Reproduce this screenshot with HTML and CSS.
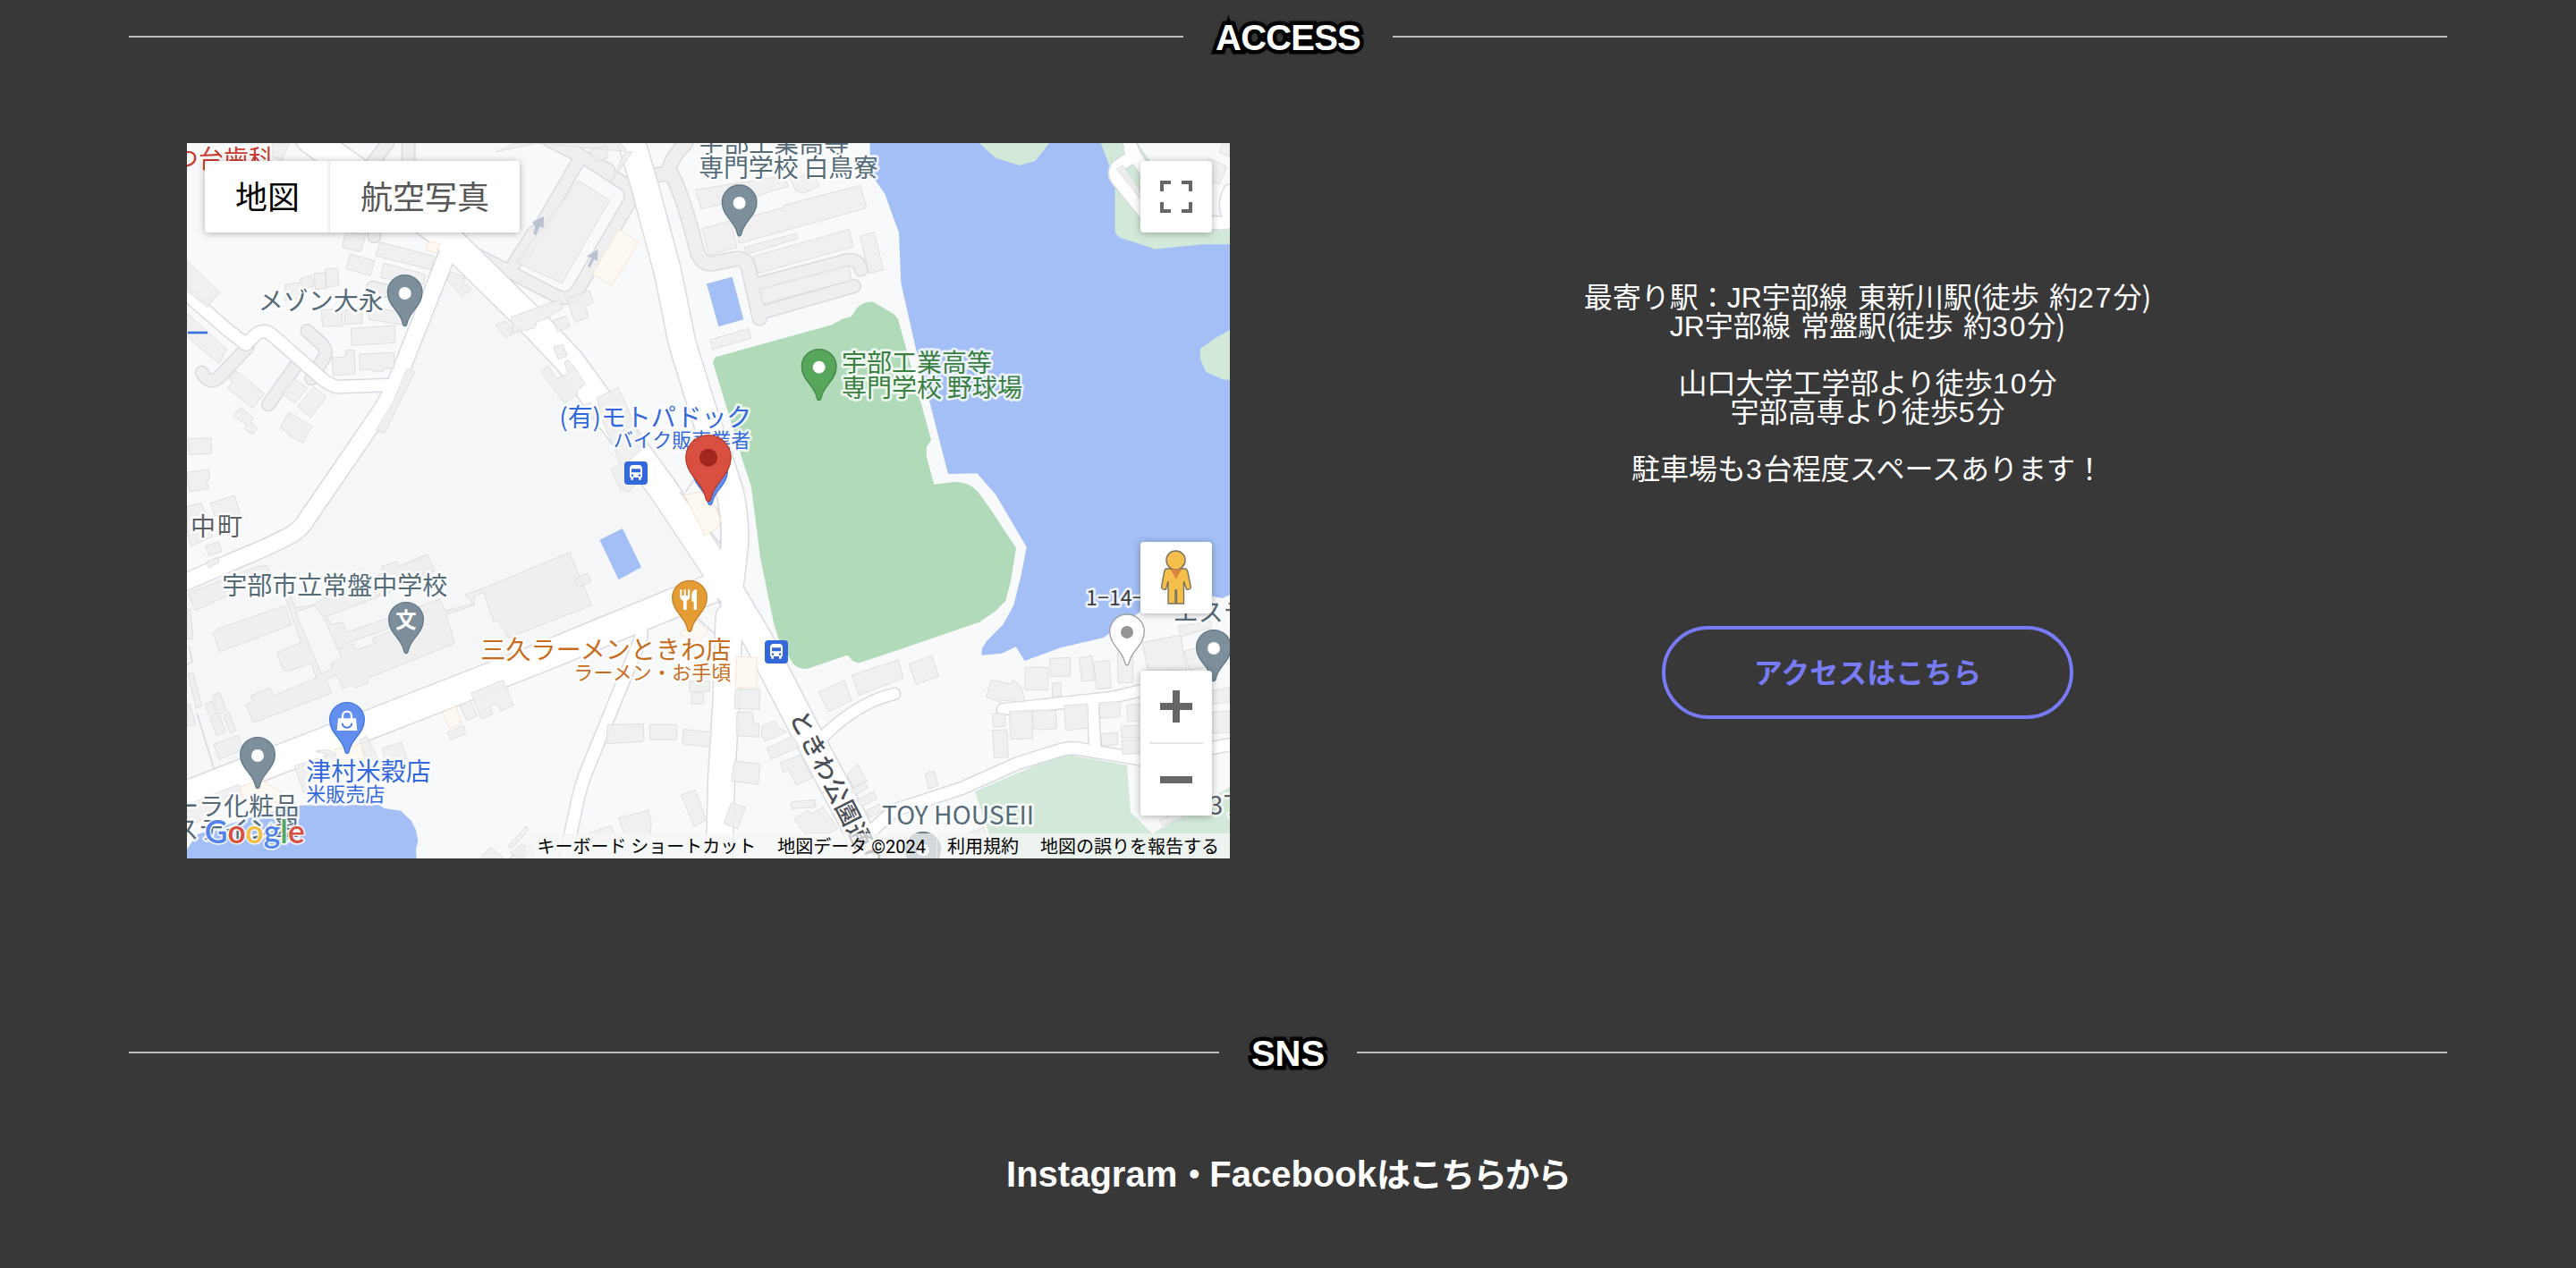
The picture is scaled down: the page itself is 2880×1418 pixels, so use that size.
FILE: index.html
```html
<!DOCTYPE html>
<html lang="ja">
<head>
<meta charset="utf-8">
<title>ACCESS</title>
<link rel="stylesheet" href="styles.css">
</head>
<body>
<main class="page">
  <h2 class="heading"><span class="heading-text heading-access">ACCESS</span></h2>

  <section class="access">
    <div class="access-col">
      <div class="map">
        <svg class="map-canvas" viewBox="27 30 3498 2400" aria-hidden="true">
          <defs>
            <path id="pin" d="M0 113C-6 113-7 105-9 97C-19 62-58 42-58 0A58 58 0 1 1 58 0C58 42 19 62 9 97C7 105 6 113 0 113Z"/>
            <g id="bus">
              <rect width="78" height="78" rx="12" fill="#3367dc"/>
              <path fill="#fff" fill-rule="evenodd" d="M18 24Q18 12 30 12H48Q60 12 60 24V54H56V62H48V54H30V62H22V54H18ZM24 25V37H54V25ZM27 43a4 4 0 1 0 .1 0ZM51 43a4 4 0 1 0 .1 0Z"/>
            </g>
            <g id="roads">
              <path class="w98" d="M440 15L880 330L1200 645L1310 762L1630 1200L1790 1440L1945 1700L2100 2000L2260 2300L2330 2450"/>
              <path class="w92" d="M1515 15L1564 180L1639 460L1688 700L1740 870L1848 1200Q1868 1290 1864 1380L1850 1500"/>
              <path class="w98" d="M0 2228L620 1988L1200 1762L1655 1575L1800 1520"/>
              <path class="w88" d="M1845 1620L1836 1900L1820 2150L1812 2450"/>
              <path class="w42" d="M1552 1640L1550 1690L1375 2118Q1345 2190 1330 2270L1295 2440"/>
              <path class="w54" d="M905 390L730 830Q710 880 670 940L430 1290Q410 1325 375 1345Q300 1385 200 1425L0 1512"/>
              <path class="w40" d="M0 515L155 650L225 705L255 675Q285 648 315 676L465 808Q500 840 530 848L700 842"/>
              <path class="w42" d="M2320 2340L2400 2268L2625 2195L2815 2110L2965 2064Q3000 2056 3040 2066L3225 2097L3465 2060L3540 2045"/>
              <path class="w36" d="M2762 1930L3130 1890L3225 1867L3340 1830"/>
              <path class="w36" d="M3065 1905L3073 2065"/>
              <path class="w36" d="M2150 2030L2200 1985Q2300 1900 2400 1878"/>
              <path class="w40" d="M3180 10L3205 70L3150 108Q3130 130 3150 155L3260 290"/>
              <path class="w40" d="M3190 50L3290 190M3440 290Q3500 308 3540 288M3525 190Q3500 240 3525 280"/>
            </g>
            <g id="lanes">
              <path class="w42" d="M430 660L478 703Q505 730 480 760L445 820"/>
              <path class="w42" d="M77 800Q105 850 145 805L230 715"/>
              <path class="w42" d="M300 907L390 780"/>
              <path class="w42" d="M655 310V343M650 515L690 525"/>
              <path class="w46" d="M1640 130Q1650 80 1700 30M1600 138L1650 130Q1690 200 1740 400Q1760 445 1800 432L1860 420Q1900 410 1910 450L1948 617"/>
              <path class="w42" d="M1930 505L2210 432Q2280 405 2288 455M1950 600L2265 510"/>
              <path class="w42" d="M1240 20L1440 120M1330 60L1500 170Q1530 200 1505 240L1340 520Q1310 565 1260 540L1000 405M1160 400L1340 90M1120 440L1190 330M640 110L700 30M770 20V110"/>
              <path class="w42" d="M1120 2450L1165 2410"/>
            </g>
          </defs>

          <rect x="27" y="30" width="3498" height="2400" fill="#f8f9fb"/>
          <path fill="#f5f6f8" d="M920 430L1200 715L1765 1470L1640 1530L27 2160V1520L400 1360L500 1240L720 820Z"/>
          <path fill="#a3bff5" d="M2318 30V130L2368 200L2400 290L2415 330L2422 500L2472 720L2580 1140L2677 1138L2740 1210L2843 1385L2825 1480L2800 1580L2765 1645L2710 1700L2694 1725L2692 1748L2760 1742L2807 1720L2837 1767L2960 1722L3100 1690L3230 1598L3465 1550L3500 1557L3525 1546V30Z"/>
          <path fill="#a3bff5" d="M27 2400L60 2350L250 2290L400 2252L670 2250L690 2262L745 2270L780 2305L795 2335L802 2370L795 2400L797 2430H27Z"/>
          <path fill="#a3bff5" d="M1770 502L1856 479L1894 622L1810 646ZM1411 1361L1488 1323L1551 1453L1475 1495Z"/>
          <path fill="#d2e8d8" d="M2684 30L2740 80L2820 105L2872 90L2920 30ZM3092 30L3117 95L3140 175V330L3155 347L3275 386L3430 370H3525V30ZM3525 657L3475 685L3426 720L3425 752L3445 798L3500 822L3525 826Z"/>
          <path fill="#f8f9fb" d="M3215 30L3300 150L3440 290L3525 280V30Z"/>
          <path fill="#d2e8d8" d="M2670 2205L2950 2085H3000L3180 2117L3192 2275L3265 2347L3525 2190V2430H2745L2715 2340Z"/>
          <path fill="#b1dab9" d="M1791 765L1800 748L2190 640L2225 620L2255 612L2275 582Q2300 560 2330 563L2400 605L2412 620L2523 1025L2508 1050L2507 1080L2533 1175L2600 1167Q2650 1165 2680 1200L2720 1255L2808 1388L2790 1500L2773 1565L2740 1600L2685 1637L2400 1735L2285 1773Q2262 1775 2250 1755Q2245 1744 2230 1752L2110 1793Q2070 1800 2050 1760L2010 1690L1995 1640L1950 1420L1920 1185L1880 1060Z"/>

          <use href="#lanes" class="casing"/>
          <use href="#lanes" class="lane-fill"/>
          <use href="#roads" class="casing"/>
          <use href="#roads" class="road-fill"/>
          <path class="edge" d="M1815 1030L1700 1200M1803 1250Q1825 1300 1815 1375L1680 1200M1805 1557L1820 1575L1810 1560ZM1740 1625L1795 1675M35 1720L45 1770L27 1780M60 1940L118 2130"/>

          <g class="building">
            <path d="M27 425L137 530L95 580L27 525ZM27 600L160 720L135 770L27 680ZM560 330L627 335L610 395L547 380ZM575 402L656 425L643 475L562 452ZM675 362L858 410L845 455L660 408ZM688 433L827 470L820 505L676 482ZM491 452L533 450L536 508L495 513ZM453 467L491 465L494 518L458 521ZM405 485L445 472L453 510L415 520ZM356 505L403 497L408 550L356 560Z"/>
            <path d="M478 590L548 585V645H482ZM557 590L615 585V635L556 638ZM640 580L765 600L755 640L637 622ZM577 652L725 642V700L580 709ZM605 738L722 733V785L686 787L685 796H650V789L608 791ZM560 725L588 724L592 805L517 810L514 750L560 747ZM190 793L287 870L247 920L163 852L178 832L170 818ZM385 820L431 852L390 903L345 870ZM453 848L495 882L442 950L399 914ZM208 916L250 953L240 965L263 988L247 1007L221 990L228 977L183 945ZM368 934L446 980L415 1036L368 1010L367 1002L339 985ZM765 787L791 798L735 910L690 1004L662 992L718 900ZM910 462L958 480L955 500L983 520L970 530L950 545L900 490Z"/>
            <path d="M31 1023L108 1018L110 1072L34 1075ZM27 1135L100 1125L104 1158L95 1160L98 1190L35 1200ZM105 1238L186 1212L206 1275L120 1280ZM27 1250L75 1237L90 1275L112 1350L40 1382L27 1330ZM90 1382L133 1367L143 1400L100 1415ZM90 1437L130 1420L136 1435L100 1455Z"/>
            <path d="M31 1540L265 1450L295 1448L310 1480L55 1598ZM340 1520L370 1530L390 1590L450 1580L480 1560L820 1415L858 1465L700 1540L495 1618L510 1645L550 1637L562 1672L760 1602L875 1560L893 1600L988 1575L960 1545L1018 1525L1310 1404L1385 1580L1105 1690L1072 1630L1057 1637L1022 1538L990 1550V1580L895 1612L925 1708L635 1825V1840L590 1858L582 1848L550 1860L530 1815L493 1828L512 1875L250 1975L225 1915L248 1903L240 1885L305 1857L318 1885L460 1825L445 1775L365 1802L350 1798L328 1740L410 1705L370 1590ZM390 1604L478 1810L512 1795V1775L545 1755L485 1620L455 1582ZM538 1728L585 1710L595 1730L655 1710L650 1692L740 1655L725 1640L700 1660L560 1710Z" fill-rule="evenodd"/>
            <path d="M115 1675L130 1660L355 1582L377 1647L137 1736ZM680 1450L730 1434L740 1450L833 1410L858 1465L700 1500ZM1327 1493L1370 1473L1383 1500L1340 1521ZM27 1595L38 1595L47 1690L35 1695L27 1690ZM30 1810L47 1807L77 1920L58 1925ZM27 1915L37 1912L55 1980L27 1988ZM88 1912L112 1902L128 1945L105 1955ZM112 1885L137 1873L160 1935L135 1947ZM107 1962L137 1952L157 2005L127 2018ZM150 1950L168 1940L191 2000L172 2010ZM117 2047L200 2017L215 2065L135 2097ZM387 2120L500 2083L460 2070L500 2065L540 2090L520 2145L420 2210ZM605 2033L630 2020L665 2090L635 2110ZM683 2060L745 2040L765 2095L695 2110ZM162 2197L200 2182L215 2210L60 2310L27 2290V2250Z"/>
            <path d="M980 1875L1087 1832L1122 1915L1080 1935L1065 1910L1043 1920L1053 1945L1015 1962ZM942 1918L978 1900L1001 1952L966 1967ZM900 2008L955 1983L962 2010L912 2033ZM1103 2390L1165 2322L1173 2335L1117 2395ZM1112 2412L1152 2380L1195 2430L1140 2430ZM1010 2430L1045 2392L1090 2430Z"/>
            <path d="M1062 60L1130 30H1480L1500 50L1450 160L1520 60L1200 30ZM315 30H370L345 88L312 75ZM1340 155L1445 222L1285 500L1130 430ZM1378 52L1435 38L1437 80L1395 92ZM1732 187L2030 140L2045 175L1990 190L1945 208L1800 240L1752 250ZM2050 150L2130 130L2147 175L2098 198L2070 190ZM1755 317L1850 290L1872 380L1778 407ZM1870 290L2030 245V238L2285 172L2306 248L1878 367ZM1897 380L2070 333L2076 350L1900 405ZM1926 410L2248 320L2263 378L2140 412L1942 467ZM2284 343L2332 328L2363 455L2315 467ZM1946 520L2248 440L2256 490L1960 570ZM1782 690L1910 652L1920 685L1790 722ZM1302 550L1378 525L1390 565L1365 577L1372 615L1327 632ZM1115 613L1278 555L1287 585L1250 605L1245 615L1200 630L1195 650L1120 668ZM1062 642L1095 627L1122 665L1100 685ZM1255 625L1298 610L1312 645L1270 663ZM1255 715L1287 705L1302 745L1273 755ZM1215 797L1240 778L1265 822L1305 803L1293 765L1305 757L1325 780L1362 838L1335 862L1338 872L1293 903Z"/>
            <path d="M1403 885L1473 850L1510 930L1560 1050L1495 1110L1560 1140L1510 1200L1480 1190L1450 1125L1480 1105L1420 960ZM1345 915L1380 900L1400 945L1360 970Z"/>
            <path d="M1712 1835H1780V1870H1712ZM1720 1874H1760V1912H1719ZM1437 1982L1558 1978L1560 2037L1434 2045ZM1580 1981H1670V2032H1579ZM1692 1996L1787 2007L1780 2057L1689 2045ZM1684 2217L1732 2200L1767 2300L1728 2323ZM1475 2295L1575 2268L1585 2310L1580 2350L1495 2350ZM1375 2345L1450 2320L1465 2360L1390 2390Z"/>
            <path d="M1866 1862L1949 1864L1947 1930L1864 1927ZM1872 1940L1925 1938L1927 1972L1946 1978L1945 2023L1870 2018ZM1863 2103L1950 2113L1943 2182L1853 2170ZM1853 2243L1900 2258L1875 2330L1828 2312ZM1958 1985L1997 1968L2010 1990L2038 2005L1965 2038L1953 2015ZM1972 2060L2060 2020L2082 2055L1988 2097ZM2017 2108L2085 2082L2125 2160L2070 2183L2045 2130L2028 2143ZM2053 2240L2135 2233V2258L2055 2263ZM2063 2300L2108 2268L2122 2280L2160 2258L2210 2330L2180 2345L2100 2345Z"/>
            <path d="M2146 1872L2232 1833L2257 1900L2178 1938ZM2257 1815L2400 1768L2412 1762L2430 1825L2405 1835L2280 1883ZM2240 2150L2277 2115L2307 2170L2265 2195ZM2250 2200L2300 2175L2313 2190L2270 2218ZM2270 2235L2330 2205L2342 2230L2290 2255ZM2305 2270L2350 2247L2360 2272L2317 2292Z"/>
            <path d="M2448 1778L2525 1749L2549 1818L2473 1846ZM2838 1789H2915V1865H2838ZM2921 1759L2990 1756V1818L2922 1820ZM3020 1757L3063 1750L3070 1832L3028 1836ZM3068 1772L3120 1766L3127 1858L3078 1862ZM3148 1740H3200V1840H3150ZM3232 1705L3360 1680L3380 1797L3250 1800ZM3352 1650L3460 1635L3465 1655L3360 1687ZM3372 1735L3420 1722L3440 1790L3388 1797ZM2725 1830L2790 1845L2800 1830L2828 1860L2837 1905L2760 1900L2755 1905L2708 1888ZM2928 1843L2958 1840L2960 1885L2930 1888ZM2785 1937L2861 1933L2863 2028L2790 2030ZM2862 1933L2942 1932L2944 1995L2866 1998ZM2969 1917L3048 1912L3050 1992L2975 2000ZM2729 1945L2770 1943L2772 1985L2732 1990ZM2728 2000L2777 1998L2782 2090L2735 2092ZM3086 1908L3155 1903L3157 1955L3090 1960ZM3180 1915L3230 1912V1968L3183 1970ZM3092 2012L3148 2008V2048L3095 2052ZM3160 1987L3230 1982V2025H3163ZM3163 2035L3230 2030V2078L3165 2080ZM3465 1868L3525 1855V1905L3465 1912ZM3465 1940L3525 1935V2008L3465 2010ZM2503 2145L2533 2137L2547 2185L2515 2197ZM2640 2350L2700 2325L2720 2400L2600 2400ZM3290 2300L3345 2275L3370 2290L3300 2320ZM3500 30H3525V75L3490 62ZM3455 82L3515 108L3490 167L3430 150ZM3145 118L3165 105L3230 200V225Z"/>
          </g>
          <g class="poi-area">
            <path d="M1475 320L1542 363L1452 508L1387 470ZM833 360L875 367L865 398L832 390ZM885 1940L930 1920L948 1975L908 1995ZM520 2065L610 2045L625 2100L540 2115ZM205 2190L270 2165L350 2210L330 2240L215 2230Z"/>
            <path d="M1682 1673L1735 1630L1775 1667L1740 1705L1682 1680ZM1870 1753L1940 1755L1938 1858L1867 1856ZM1695 1210L1775 1195L1815 1290L1812 1318L1765 1347Z"/>
          </g>
          <path fill="#bcc1d3" d="M1372 440L1385 415L1367 410L1405 386L1404 425L1393 420L1378 450ZM1188 332L1195 310L1185 295L1224 276L1223 316L1210 310L1198 340Z"/>

          <g class="label slate">
            <text x="266" y="592">メゾン大永</text>
            <text x="1744" y="62">宇部工業高等</text>
            <text x="1744" y="144" textLength="602">専門学校 白鳥寮</text>
            <text x="145" y="1545" textLength="756">宇部市立常盤中学校</text>
            <text x="-17" y="2286">ーラ化粧品</text>
            <text x="-17" y="2364">ステイン翠</text>
            <text x="3335" y="1634">エステ</text>
            <text x="2358" y="2315" textLength="510" lengthAdjust="spacingAndGlyphs">TOY HOUSEII</text>
            <text x="3455" y="2284" class="town">3丁</text>
          </g>
          <text class="label town" x="39" y="1346" textLength="174">中町</text>
          <text class="label address" x="3042" y="1580">1−14−5</text>
          <text class="label red" x="-18" y="115">つ台歯科</text>
          <g class="label green">
            <text x="2223" y="799" textLength="504">宇部工業高等</text>
            <text x="2223" y="883" textLength="606">専門学校 野球場</text>
          </g>
          <g class="label blue">
            <text x="1276" y="982" textLength="645">(有)モトパドック</text>
            <text class="small" x="1918" y="1050" text-anchor="end">バイク販売業者</text>
            <text x="427" y="2169" textLength="418">津村米穀店</text>
            <text class="small" x="427" y="2238">米販売店</text>
          </g>
          <path stroke="#3b70dc" stroke-width="8" d="M30 666H96"/>
          <g class="label orange">
            <text x="1012" y="1760" textLength="840">三久ラーメンときわ店</text>
            <text class="small" x="1852" y="1829" text-anchor="end" textLength="528">ラーメン・お手頃</text>
          </g>
          <g class="label street" transform="translate(2046 1954) rotate(63)">
            <text textLength="588">ときわ公園通り</text>
          </g>

          <g class="pin-slate">
            <use href="#pin" x="758" y="531"/><use href="#pin" x="1880" y="229"/>
            <use href="#pin" x="762" y="1629"/><use href="#pin" x="264" y="2082"/>
            <use href="#pin" x="3471" y="1722"/><use href="#pin" x="2496" y="2400"/>
          </g>
          <use href="#pin" x="2147" y="780" fill="#58a55c" stroke="#418647" stroke-width="4"/>
          <use href="#pin" x="564" y="1965" fill="#628fee" stroke="#4377dd" stroke-width="4"/>
          <use href="#pin" x="1782" y="1131" fill="#628fee" stroke="#4377dd" stroke-width="4"/>
          <use href="#pin" x="1713" y="1556" fill="#e49c35" stroke="#c8832b" stroke-width="4"/>
          <use href="#pin" x="3180" y="1669" fill="#fff" stroke="#9c9fa0" stroke-width="4"/>
          <g fill="#fff">
            <circle cx="758" cy="534" r="21"/><circle cx="1880" cy="231" r="21"/>
            <circle cx="264" cy="2085" r="21"/><circle cx="3471" cy="1725" r="21"/>
            <circle cx="2496" cy="2402" r="21"/><circle cx="2147" cy="782" r="21"/>
          </g>
          <circle cx="3180" cy="1671" r="21" fill="#969696"/>
          <text class="pin-glyph" x="762" y="1656" text-anchor="middle">文</text>
          <path fill="#fff" d="M534 1960H594L598 2001H530Z"/>
          <path fill="none" stroke="#fff" stroke-width="7" d="M549 1962V1952A15 15 0 0 1 579 1952V1962"/>
          <path fill="none" stroke="#4a7de0" stroke-width="6" d="M548 1976A16 15 0 0 0 580 1976"/>
          <path fill="#fff" d="M1681 1528H1687V1548H1694V1528H1700V1548H1707V1528H1714V1552Q1714 1562 1703 1565V1596H1692V1565Q1681 1562 1681 1552ZM1737 1527V1596H1727V1568H1720V1545Q1722 1528 1737 1527Z"/>
          <use href="#pin" transform="translate(1776 1085) scale(1.3)" fill="#d94f40" stroke="#b3392d" stroke-width="3"/>
          <circle cx="1776" cy="1085" r="30" fill="#a1271e"/>
          <use href="#bus" x="1494" y="1098"/><use href="#bus" x="1965" y="1698"/>
          <text class="brand" x="86" y="2379" textLength="336" lengthAdjust="spacingAndGlyphs"><tspan fill="#5383ec">G</tspan><tspan fill="#d85040">o</tspan><tspan fill="#f2bf42">o</tspan><tspan fill="#5383ec">g</tspan><tspan fill="#58a55c">l</tspan><tspan fill="#d85040">e</tspan></text>
        </svg>

        <div class="map-types">
          <button class="map-type is-active">地図</button>
          <button class="map-type">航空写真</button>
        </div>
        <button class="map-control map-full" aria-label="全画面">
          <svg width="36" height="36" viewBox="0 0 36 36"><path fill="none" stroke="#666" stroke-width="4" d="M2 12V2H12M24 2H34V12M34 24V34H24M12 34H2V24"/></svg>
        </button>
        <button class="map-control map-pegman" aria-label="ペグマン">
          <svg width="36" height="62" viewBox="0 0 36 62"><g fill="#f4bf4b" stroke="#77715f" stroke-width="1.4"><path d="M7 21H28Q30 21 31 25L34.500 42Q33 45 29.500 44L26.500 35V60H18.500V45H17V60H9V35L6.500 44Q3 45 1.500 42L4.500 25Q5.500 21 7 21Z"/><circle cx="17.500" cy="11.500" r="10.500"/></g><path fill="#d98442" d="M11.500 21.500H24L17.800 32.500Z"/></svg>
        </button>
        <div class="map-control map-zoom">
          <svg width="36" height="36" viewBox="0 0 36 36"><path fill="#666" d="M14 0H22V14H36V22H22V36H14V22H0V14H14Z"/></svg>
          <i class="zoom-line"></i>
          <svg width="36" height="36" viewBox="0 0 36 36"><path fill="#666" d="M0 14H36V22H0Z"/></svg>
        </div>
        <div class="map-legal">
          <span>キーボード ショートカット</span><span>地図データ ©2024</span><span>利用規約</span><span>地図の誤りを報告する</span>
        </div>
      </div>
    </div>

    <div class="access-col access-info">
      <p class="directions">最寄り駅：<span class="latin">JR</span>宇部線 東新川駅(徒歩 約<span class="num">27</span>分)<br><span class="latin">JR</span>宇部線 常盤駅(徒歩 約<span class="num">30</span>分)<br><br>山口大学工学部より徒歩<span class="num">10</span>分<br>宇部高専より徒歩<span class="num">5</span>分<br><br>駐車場も<span class="num">3</span>台程度スペースあります！</p>
      <a class="access-button">アクセスはこちら</a>
    </div>
  </section>

  <h2 class="heading"><span class="heading-text">SNS</span></h2>
  <p class="sns-lead">Instagram<span class="kana">・</span>Facebook<span class="kana">はこちらから</span></p>
</main>
</body>
</html>
```
FILE: styles.css
```css
* { box-sizing: border-box; }
html, body { margin: 0; }
body {
  background: #383838;
  color: #fff;
  font-family: "Noto Sans CJK JP", sans-serif;
  height: 1418px;
  overflow: hidden;
}
.page { padding: 0 144px; }

.heading {
  display: flex;
  align-items: center;
  gap: 36px;
  height: 82px;
  margin: 0;
  font: bold 40px/40px "Liberation Sans", Arial, sans-serif;
}
.heading::before, .heading::after {
  content: "";
  flex: 1;
  height: 2px;
  background: #bcbebc;
}
.heading-text {
  padding-top: 2px;
  -webkit-text-stroke: 9px #000;
  paint-order: stroke fill;
  text-shadow: 0 0 6px #000;
}
.heading-access { letter-spacing: -.8px; }

.access { display: flex; height: 1054px; padding-top: 78px; }
.access-col { flex: 1; display: flex; flex-direction: column; align-items: center; }

.map {
  position: relative;
  width: 1166px;
  height: 800px;
  overflow: hidden;
}
.map-canvas { display: block; width: 100%; height: 100%; }
.casing, .road-fill, .lane-fill { fill: none; stroke-linejoin: round; stroke-linecap: round; }
.casing { stroke: #dadbe0; --edge: 9px; }
.road-fill { stroke: #fff; --edge: 0px; }
.lane-fill { stroke: #efeff0; --edge: 0px; }
.w36 { stroke-width: calc(36px + var(--edge)); }
.w40 { stroke-width: calc(40px + var(--edge)); }
.w42 { stroke-width: calc(39px + var(--edge)); }
.w46 { stroke-width: calc(44px + var(--edge)); }
.w54 { stroke-width: calc(54px + var(--edge)); }
.w88 { stroke-width: calc(86px + var(--edge)); }
.w92 { stroke-width: calc(88px + var(--edge)); }
.w98 { stroke-width: calc(94px + var(--edge)); }
.edge { fill: none; stroke: #dadbe0; stroke-width: 5px; }
.building { fill: #eee; fill-opacity: .88; stroke: #dfdfe0; stroke-width: 3px; }
.poi-area { fill: #fdf8f1; stroke: #f6e6d5; stroke-width: 3px; }

.label {
  font-size: 84px;
  paint-order: stroke;
  stroke: rgba(255, 255, 255, .8);
  stroke-width: 16px;
  stroke-linejoin: round;
}
.small { font-size: 66px; }
.slate { fill: #566b78; }
.town { fill: #5b5f66; }
.address { fill: #3c3c3c; font-size: 70px; }
.red { fill: #c93c31; }
.green { fill: #39803f; }
.blue { fill: #3369dd; }
.orange { fill: #c76d20; }
.street { fill: #4c5157; font-size: 82px; font-weight: 500; }
.pin-slate { fill: #7d8f9b; stroke: #607886; stroke-width: 4px; }
.pin-glyph { font-size: 70px; font-weight: 700; fill: #fff; }
.brand {
  font: 600 108px Lato, sans-serif;
  stroke: rgba(255, 255, 255, .85);
  stroke-width: 10px;
  paint-order: stroke;
}

.map button { border: 0; padding: 0; font-family: inherit; }
.map-types {
  position: absolute;
  left: 20px;
  top: 20px;
  display: flex;
  height: 80px;
  border-radius: 4px;
  box-shadow: 0 1px 8px rgba(0, 0, 0, .3);
}
.map .map-type {
  width: 212px;
  padding-bottom: 3px;
  background: #fff;
  color: #565656;
  font-size: 36px;
  line-height: 77px;
  border-radius: 0 4px 4px 0;
}
.map .map-type.is-active {
  width: 140px;
  color: #000;
  border-radius: 4px 0 0 4px;
  box-shadow: inset -4px 0 4px -3px rgba(0, 0, 0, .12);
}
.map-control {
  position: absolute;
  right: 20px;
  width: 80px;
  height: 80px;
  display: flex;
  align-items: center;
  justify-content: center;
  background: #fff;
  border-radius: 4px;
  box-shadow: 0 1px 8px rgba(0, 0, 0, .3);
}
.map-full { top: 20px; }
.map-pegman { top: 446px; }
.map-zoom { top: 590px; height: 162px; flex-direction: column; justify-content: space-between; padding: 22px 0; }
.zoom-line { width: 60px; height: 2px; background: #e6e6e6; }
.map-legal {
  position: absolute;
  right: 0;
  bottom: 0;
  display: flex;
  height: 28px;
  color: #000;
  font: 20px/30px Roboto, "Noto Sans CJK JP", sans-serif;
  white-space: nowrap;
}
.map-legal span {
  padding: 0 12px;
  background: rgba(245, 245, 245, .72);
  box-shadow: inset 1px 0 rgba(255, 255, 255, .4);
}

.access-info { padding-top: 154px; }
.directions {
  margin: 0;
  font-size: 32px;
  line-height: 32px;
  word-spacing: 4px;
  text-align: center;
  white-space: nowrap;
}
.latin, .num { font-family: "Liberation Sans", Arial, sans-serif; line-height: 0; }
.num { letter-spacing: 2px; }
.access-button {
  margin-top: 162px;
  width: 460px;
  height: 104px;
  border: 4px solid #777bf6;
  border-radius: 52px;
  color: #777bf6;
  font-size: 32px;
  font-weight: 700;
  line-height: 93px;
  text-align: center;
}
.sns-lead {
  margin: 65px 0 0;
  font: bold 40px/60px "Liberation Sans", "Noto Sans CJK JP", sans-serif;
  text-align: center;
}
.kana {
  font-family: "Noto Sans CJK JP", sans-serif;
  font-size: 38px;
  line-height: 0;
  letter-spacing: -2px;
}
```
